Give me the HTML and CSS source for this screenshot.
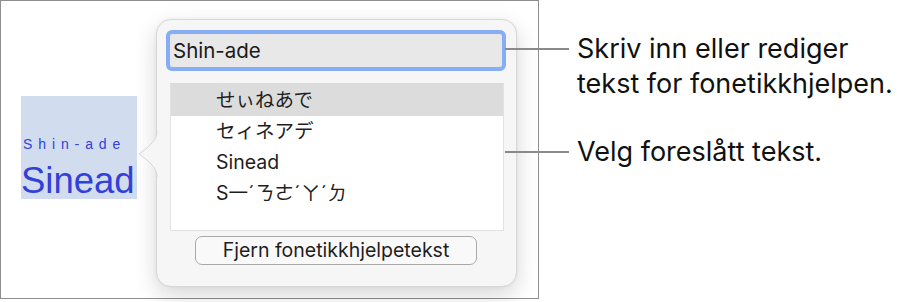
FILE: index.html
```html
<!DOCTYPE html>
<html lang="nb">
<head>
<meta charset="utf-8">
<link rel="stylesheet" href="styles.css">
</head>
<body>
<div class="page">
  <div class="frame">
    <div class="word">
      <div class="ruby">Shin-ade</div>
      <div class="base">Sinead</div>
    </div>
    <div class="popover">
      <svg class="arrow" width="22" height="46" viewBox="0 0 22 46">
        <path d="M19 0 C19 8 14 12 10 16 L1 23 L10 30 C14 34 19 38 19 46 L22 46 L22 0 Z" fill="#f6f6f6"/>
        <path d="M19 0 C19 8 14 12 10 16 L1 23 L10 30 C14 34 19 38 19 46" fill="none" stroke="#d6d6d6" stroke-width="1"/>
      </svg>
      <div class="field">Shin-ade</div>
      <ul class="list">
        <li class="row selected">せぃねあで</li>
        <li class="row">セィネアデ</li>
        <li class="row">Sinead</li>
        <li class="row">S一ˊㄋㄜˊㄚˊㄉ</li>
      </ul>
      <div class="actions">
        <button class="btn">Fjern fonetikkhjelpetekst</button>
      </div>
    </div>
  </div>
  <div class="callouts">
    <div class="callout c1">
      <span class="leader l1"></span>
      <p>Skriv inn eller rediger<br>tekst for fonetikkhjelpen.</p>
    </div>
    <div class="callout c2">
      <span class="leader l2"></span>
      <p>Velg foreslått tekst.</p>
    </div>
  </div>
</div>
</body>
</html>
```
FILE: styles.css
```css
* { box-sizing: border-box; }
html, body { margin: 0; padding: 0; background: #fff; }
body { font-family: Inter, "Liberation Sans", "Noto Sans CJK JP", sans-serif; color: #1e1e1e; }

.page {
  display: flex;
  align-items: flex-start;
  width: 900px;
  height: 302px;
}

.frame {
  width: 539px;
  height: 299px;
  border: 1px solid #8e8e8e;
  display: flex;
  align-items: flex-start;
  padding: 18px 0 0 20px;
  flex: none;
}

.word {
  margin-top: 77px;
  width: 116px;
  height: 103px;
  background: #d1ddef;
  color: #3340d8;
  display: flex;
  flex-direction: column;
  align-items: flex-start;
  padding: 40px 0 0 2px;
  font-family: "Liberation Sans", sans-serif;
}
.ruby {
  font-size: 14px;
  letter-spacing: 5.9px;
  line-height: 16px;
}
.base {
  font-size: 36.5px;
  line-height: 40px;
  margin-top: 9px;
  margin-left: -2px;
}

.popover {
  position: relative;
  margin-left: 19px;
  width: 361px;
  height: 268px;
  background: #f6f6f6;
  border: 1px solid #d8d8d8;
  border-radius: 15px;
  box-shadow: 0 8px 22px rgba(0,0,0,0.16), 0 0 3px rgba(0,0,0,0.06);
  padding: 10px 10px 0 9px;
  display: flex;
  flex-direction: column;
}
.arrow {
  position: absolute;
  left: -19px;
  top: 111px;
}

.field {
  height: 41px;
  border: 4px solid #86aef6;
  border-radius: 6px;
  background: #e8e8e8;
  font-size: 20.5px;
  line-height: 33px;
  padding-left: 3px;
  color: #1a1a1a;
}

.list {
  list-style: none;
  margin: 12px 2px 0 4px;
  padding: 0;
  height: 148px;
  background: #fff;
  border: 1px solid #e2e2e2;
  border-top-color: #dadada;
}
.row {
  height: 31px;
  line-height: 31px;
  padding-left: 45px;
  font-size: 19.5px;
  color: #1e1e1e;
  font-family: Inter, "Noto Sans CJK JP", sans-serif;
}
.row.selected { background: #dcdcdc; height: 32px; line-height: 32px; }

.actions {
  display: flex;
  justify-content: center;
  margin-top: 5px;
}
.btn {
  width: 282px;
  height: 29px;
  border: 1px solid #a9a9a9;
  border-radius: 7px;
  background: #f9f9f9;
  font-family: Inter, "Liberation Sans", sans-serif;
  font-size: 19.5px;
  line-height: 25px;
  color: #1e1e1e;
  padding: 0;
}

.callouts {
  position: relative;
  flex: 1;
  height: 302px;
}
.callout p {
  margin: 0;
  font-size: 27px;
  line-height: 35px;
  color: #111;
  padding-left: 38px;
}
.c1 { margin-top: 31px; }
.c2 { margin-top: 33px; }
.callout { position: relative; }
.leader {
  position: absolute;
  height: 2px;
  background: #8a8a8a;
  left: -34px;
  width: 64px;
}
.l1 { top: 17px; }
.l2 { top: 17px; }
```
